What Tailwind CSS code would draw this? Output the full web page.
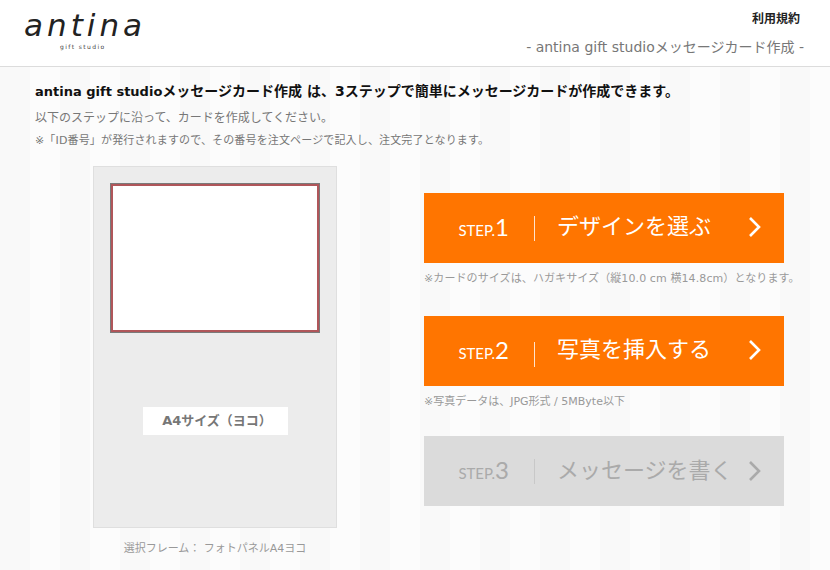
<!DOCTYPE html>
<html lang="ja">
  <head>
    <meta charset="UTF-8" />
    <meta name="viewport" content="width=device-width, initial-scale=1.0" />
    <title>antina gift studio メッセージカード作成</title>
    <script src="https://cdn.jsdelivr.net/npm/@tailwindcss/browser@4"></script>
  </head>
  <body class="h-[570px] w-[830px] overflow-hidden bg-[repeating-linear-gradient(90deg,#f9f9f9_0,#f9f9f9_30px,#fcfcfc_30px,#fcfcfc_60px)] font-['DejaVu_Sans','Noto_Sans_CJK_JP',sans-serif]">
    <!-- header -->
    <header class="flex h-[67px] justify-between border-b border-[#dcdcdc] bg-white">
      <div class="flex flex-col items-start pl-[24px] pt-[9px]">
        <span class="text-[31px] leading-[32px] tracking-[4px] whitespace-nowrap text-[#222] italic">antina</span>
        <span class="mt-[2px] ml-[36px] text-[6px] leading-[8px] tracking-[1.4px] text-[#444] whitespace-nowrap">gift studio</span>
      </div>
      <div class="flex flex-col items-end pr-[26px] pt-[12px]">
        <a class="pr-[4px] text-[12px] leading-[14px] font-bold text-[#222]">利用規約</a>
        <p class="mt-[11px] text-[14px] leading-[20px] text-[#777] whitespace-nowrap">- antina gift studioメッセージカード作成 -</p>
      </div>
    </header>

    <!-- intro -->
    <section class="pl-[35px] pt-[14px]">
      <h1 class="text-[14px] leading-[20px] font-bold text-[#111] whitespace-nowrap"><span class="text-[13px]">antina gift studio</span>メッセージカード作成 は、3ステップで簡単にメッセージカードが作成できます。</h1>
      <p class="mt-[7px] text-[12px] leading-[18px] text-[#777]">以下のステップに沿って、カードを作成してください。</p>
      <p class="mt-[6px] text-[11px] leading-[16px] tracking-[0.15px] text-[#777]">※「ID番号」が発行されますので、その番号を注文ページで記入し、注文完了となります。</p>
    </section>

    <main class="mt-[17px] flex pl-[93px]">
      <!-- frame preview -->
      <div class="w-[244px] shrink-0">
        <div class="flex h-[362px] flex-col items-center border border-[#dfdfdf] bg-[#ececec] pt-[17px]">
          <div class="h-[148px] w-[208px] border-2 border-[#b0565a] bg-white shadow-[0_0_0_1px_#7a7a7a]"></div>
          <div class="mt-[75px] flex h-[28px] w-[145px] items-center justify-center bg-white pl-[4px] text-[13px] font-bold text-[#777]">A4サイズ（ヨコ）</div>
        </div>
        <p class="mt-[13px] text-center text-[11px] leading-[16px] text-[#999]">選択フレーム： フォトパネルA4ヨコ</p>
      </div>

      <!-- steps -->
      <div class="ml-[87px] pt-[27px]">
        <a class="flex h-[70px] w-[360px] items-center bg-[#ff7500] text-white">
          <span class="flex w-[110px] items-baseline justify-end whitespace-nowrap pr-[25px] font-['Lato',sans-serif]"><span class="text-[15px]">STEP.</span><span class="text-[24px] leading-none">1</span></span>
          <span class="h-[25px] w-px bg-white/80"></span>
          <span class="ml-[22px] w-[190px] pb-[2px] text-[22px] leading-[30px] whitespace-nowrap">デザインを選ぶ</span>
          <svg class="mb-[3px] ml-[1px]" width="14" height="22" viewBox="0 0 14 22" fill="none" stroke="currentColor" stroke-width="2.6"><path d="M2 2l9 9-9 9" /></svg>
        </a>
        <p class="mt-[8px] text-[11px] leading-[16px] tracking-[0.1px] whitespace-nowrap text-[#999]">※カードのサイズは、ハガキサイズ（縦10.0 cm 横14.8cm）となります。</p>
        <a class="mt-[29px] flex h-[70px] w-[360px] items-center bg-[#ff7500] text-white">
          <span class="flex w-[110px] items-baseline justify-end whitespace-nowrap pr-[25px] font-['Lato',sans-serif]"><span class="text-[15px]">STEP.</span><span class="text-[24px] leading-none">2</span></span>
          <span class="mt-[6px] h-[25px] w-px bg-white/80"></span>
          <span class="ml-[22px] w-[190px] pb-[2px] text-[22px] leading-[30px] whitespace-nowrap">写真を挿入する</span>
          <svg class="mb-[3px] ml-[1px]" width="14" height="22" viewBox="0 0 14 22" fill="none" stroke="currentColor" stroke-width="2.6"><path d="M2 2l9 9-9 9" /></svg>
        </a>
        <p class="mt-[8px] text-[11px] leading-[16px] whitespace-nowrap text-[#999]">※写真データは、JPG形式 / 5MByte以下</p>
        <a class="mt-[26px] flex h-[70px] w-[360px] items-center bg-[#dbdbdb] text-[#aaa]">
          <span class="flex w-[110px] items-baseline justify-end whitespace-nowrap pr-[25px] font-['Lato',sans-serif]"><span class="text-[15px]">STEP.</span><span class="text-[24px] leading-none">3</span></span>
          <span class="h-[25px] w-px bg-[#c8c8c8]"></span>
          <span class="ml-[22px] w-[190px] text-[22px] leading-[30px] whitespace-nowrap">メッセージを書く</span>
          <svg class="ml-[1px]" width="14" height="22" viewBox="0 0 14 22" fill="none" stroke="currentColor" stroke-width="2.6"><path d="M2 2l9 9-9 9" /></svg>
        </a>
      </div>
    </main>
  </body>
</html>
